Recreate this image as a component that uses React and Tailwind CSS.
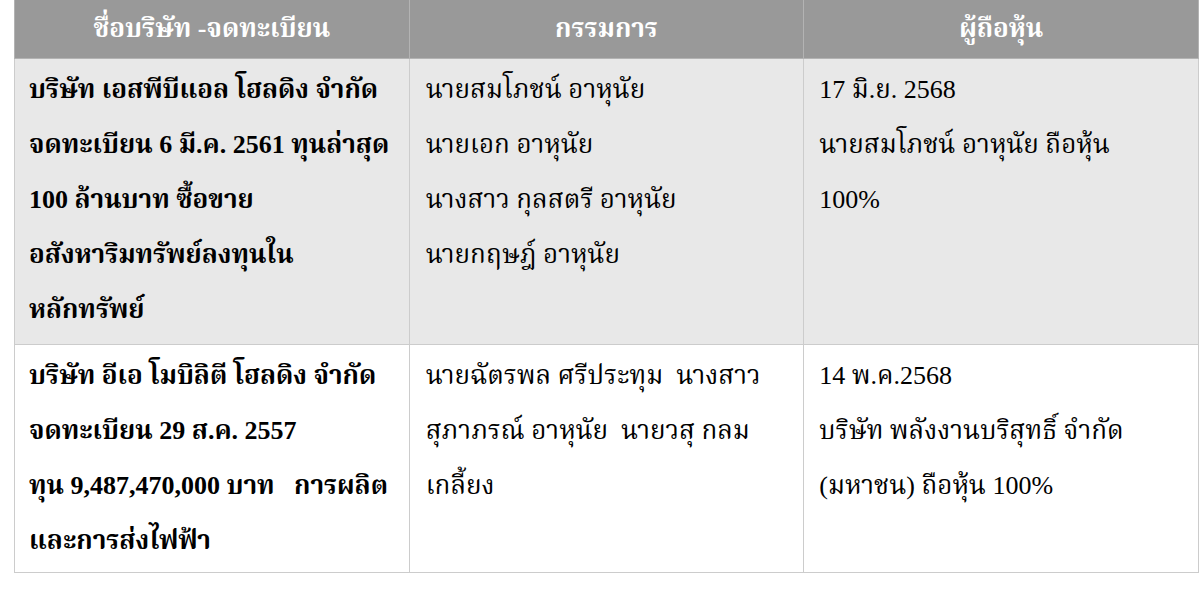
export default function App() {
  const cell1 = "border border-[#cccccc] align-top px-[14px] pt-[3px] pb-[7px]";
  const cell2 = "border border-[#cccccc] align-top px-[14px] pt-[3px] pb-[4px]";
  const Lines = ({ lines, bold }) => (
    <div className={bold ? "font-bold" : ""}>
      {lines.map((l, i) => (
        <div key={i} className="h-[55px] leading-[55px] whitespace-pre">{l}</div>
      ))}
    </div>
  );
  return (
    <div className="w-[1200px] h-[593px] bg-white pl-[14px] pr-px text-black text-[26px] [font-family:'Liberation_Serif','Noto_Serif_Thai','Noto_Sans_Thai',serif]">
      <table className="w-full border-collapse table-fixed">
        <thead>
          <tr className="bg-[#999999] h-[58px]">
            <th className="border border-[#b3b3b3] border-t-0 text-white font-bold text-center align-middle">ชื่อบริษัท -จดทะเบียน</th>
            <th className="border border-[#b3b3b3] border-t-0 text-white font-bold text-center align-middle">กรรมการ</th>
            <th className="border border-[#b3b3b3] border-t-0 text-white font-bold text-center align-middle">ผู้ถือหุ้น</th>
          </tr>
        </thead>
        <tbody>
          <tr className="bg-[#e8e8e8]">
            <td className={cell1}>
              <Lines bold lines={["บริษัท เอสพีบีแอล โฮลดิง จำกัด", "จดทะเบียน 6 มี.ค. 2561 ทุนล่าสุด", "100 ล้านบาท ซื้อขาย", "อสังหาริมทรัพย์ลงทุนใน", "หลักทรัพย์"]} />
            </td>
            <td className={cell1 + " pl-[16px]"}>
              <Lines lines={["นายสมโภชน์ อาหุนัย", "นายเอก อาหุนัย", "นางสาว กุลสตรี อาหุนัย", "นายกฤษฎ์ อาหุนัย"]} />
            </td>
            <td className={cell1 + " pl-[15px]"}>
              <Lines lines={["17 มิ.ย. 2568", "นายสมโภชน์ อาหุนัย ถือหุ้น", "100%"]} />
            </td>
          </tr>
          <tr className="bg-white">
            <td className={cell2}>
              <Lines bold lines={["บริษัท อีเอ โมบิลิตี โฮลดิง จำกัด", "จดทะเบียน 29 ส.ค. 2557", "ทุน 9,487,470,000 บาท   การผลิต", "และการส่งไฟฟ้า"]} />
            </td>
            <td className={cell2 + " pl-[16px]"}>
              <Lines lines={["นายฉัตรพล ศรีประทุม  นางสาว", "สุภาภรณ์ อาหุนัย  นายวสุ กลม", "เกลี้ยง"]} />
            </td>
            <td className={cell2 + " pl-[15px]"}>
              <Lines lines={["14 พ.ค.2568", "บริษัท พลังงานบริสุทธิ์ จำกัด", "(มหาชน) ถือหุ้น 100%"]} />
            </td>
          </tr>
        </tbody>
      </table>
    </div>
  );
}
